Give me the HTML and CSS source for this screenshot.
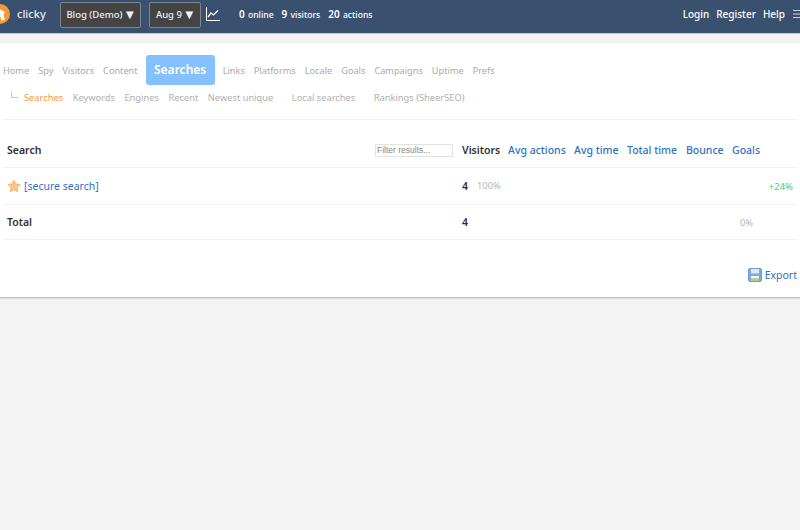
FILE: index.html
```html
<!DOCTYPE html>
<html lang="en">
<head>
<meta charset="utf-8">
<title>Clicky</title>
<link rel="stylesheet" href="styles.css">
</head>
<body>
<header class="topbar">
  <div class="brand">
    <svg class="logo" viewBox="0 0 24 24" aria-hidden="true"><circle cx="12" cy="12" r="12" fill="#f39a33"/><path d="M10 5l8 5-2 3 2 6-4 1-2-6-3 2z" fill="#fff"/></svg>
    <span class="brand-name">clicky</span>
  </div>
  <button class="drop drop-site">Blog (Demo) <span class="tri">▼</span></button>
  <button class="drop drop-date">Aug 9 <span class="tri">▼</span></button>
  <svg class="chart" viewBox="0 0 14 14" aria-hidden="true"><path d="M.5 0v13.500H14" fill="none" stroke="#fff" stroke-width="1"/><path d="M2 10l3-4 2.500 2L12 3.500" fill="none" stroke="#fff" stroke-width="1.300"/></svg>
  <div class="stats">
    <span><b>0</b> online</span>
    <span><b>9</b> visitors</span>
    <span><b>20</b> actions</span>
  </div>
  <nav class="account">
    <a>Login</a><a>Register</a><a>Help</a>
    <svg class="burger" viewBox="0 0 10 10" aria-hidden="true"><path d="M0 1.500h10M0 5h10M0 8.500h10" stroke="#c9d2de" stroke-width="1"/></svg>
  </nav>
</header>
<main class="panel">
  <nav class="mainnav">
    <a>Home</a><a>Spy</a><a>Visitors</a><a>Content</a><a class="current">Searches</a><a>Links</a><a>Platforms</a><a>Locale</a><a>Goals</a><a>Campaigns</a><a>Uptime</a><a>Prefs</a>
  </nav>
  <nav class="subnav">
    <span class="elbow"></span>
    <a class="on">Searches</a><a>Keywords</a><a>Engines</a><a>Recent</a><a>Newest unique</a><a class="far">Local searches</a><a class="far">Rankings (SheerSEO)</a>
  </nav>
  <section class="report">
    <div class="row head">
      <div class="name"><b>Search</b><input class="filter" placeholder="Filter results..."></div>
      <b>Visitors</b><a>Avg actions</a><a>Avg time</a><a>Total time</a><a>Bounce</a><a>Goals</a>
    </div>
    <div class="row data">
      <div class="name"><svg class="star" viewBox="0 0 24 24" aria-hidden="true"><path d="M12 2l3.200 6.600 7.300.9-5.300 5 1.400 7.300L12 18.300l-6.600 3.500 1.400-7.300-5.300-5 7.300-.9z" fill="#fac586" stroke="#f3b469" stroke-width="1.500" stroke-linejoin="round"/></svg><a>[secure search]</a></div>
      <div class="vis"><b>4</b><span class="muted">100%</span></div>
      <span></span><span></span><span></span><span></span>
      <span class="up">+24%</span>
    </div>
    <div class="row total">
      <div class="name"><b>Total</b></div>
      <div class="vis"><b>4</b></div>
      <span></span><span></span><span></span><span></span>
      <span class="muted zero">0%</span>
    </div>
  </section>
  <div class="export">
    <svg class="disk" viewBox="0 0 14 14" aria-hidden="true"><rect x=".5" y=".5" width="13" height="13" rx="1.500" fill="#7fa8da" stroke="#6f9bd0"/><rect x="3" y="1" width="8" height="4.500" fill="#dfe8f3"/><rect x="3" y="8" width="8" height="2.500" fill="#f2f5f0"/><rect x="3" y="10.500" width="8" height="2.500" fill="#a9d490"/></svg>
    <a>Export</a>
  </div>
</main>
</body>
</html>
```
FILE: styles.css
```css
* { box-sizing: border-box; }
html, body { margin: 0; height: 100%; }
body {
  background: #f3f3f3;
  font-family: "Noto Sans", "DejaVu Sans", sans-serif;
  font-size: 10.5px;
  color: #333;
  overflow: hidden;
}
a { color: inherit; text-decoration: none; }
b { font-weight: 600; }

.topbar {
  height: 34px;
  padding-bottom: 6px;
  background: #3a506f;
  border-bottom: 1px solid #c9c9c9;
  display: flex;
  align-items: center;
  color: #fff;
}
.brand { display: flex; align-items: center; width: 60px; flex: none; }
.logo { width: 20px; height: 20px; margin-left: -10px; flex: none; }
.brand-name { margin-left: 7px; font-size: 11px; font-weight: 500; color: #e8ecf2; }
.drop {
  height: 26px;
  margin: 2px 8px 0 0;
  padding: 0 1px 0 0;
  background: #444;
  border: 1px solid #7c8794;
  border-radius: 2px;
  color: #f0f0f0;
  font: 500 9.5px "Noto Sans", sans-serif;
  flex: none;
}
.drop-site { width: 81px; }
.drop-date { width: 52px; margin-right: 5px; }
.tri { font: 10px "DejaVu Sans", sans-serif; margin-left: 1px; }
.chart { width: 14px; height: 14px; flex: none; }
.stats { margin-left: 19px; display: flex; gap: 8px; font-size: 8.6px; font-weight: 500; }
.stats b { font-size: 10px; margin-right: 1px; }
.account { margin-left: auto; display: flex; align-items: center; gap: 7px; font-size: 10px; font-weight: 500; margin-right: -3px; }
.burger { width: 10px; height: 10px; margin-left: 1px; }

.panel {
  margin-top: 9px;
  height: 254px;
  background: #fff;
  box-shadow: 0 1px 2px rgba(0,0,0,.3);
  padding: 12px 3px 0;
  display: flex;
  flex-direction: column;
}
.mainnav { display: flex; align-items: center; gap: 9px; height: 30px; color: #aaa; font-size: 9.2px; }
.current {
  background: #85c0ff;
  color: #fff;
  font-size: 12px;
  font-weight: 600;
  width: 69px;
  height: 30px;
  line-height: 30px;
  text-align: center;
  border-radius: 3px;
  margin: 0 -1px;
}
.subnav {
  display: flex;
  align-items: center;
  gap: 9.5px;
  color: #b0b0b0;
  font-size: 9.3px;
  padding-left: 8px;
  border-bottom: 1px solid #f2f2f2;
  height: 35px;
  padding-bottom: 9px;
}
.elbow { width: 7px; height: 7px; border-left: 1px solid #c8c8c8; border-bottom: 1px solid #c8c8c8; margin-top: -6px; margin-right: -3.500px; }
.on { color: #f79a3a; }
.far { margin-left: 9px; }

.report { display: flex; flex-direction: column; margin-top: 12px; }
.row {
  display: grid;
  grid-template-columns: 459px 46px 66px 53px 59px 46px 65px;
  align-items: center;
  border-bottom: 1px solid #f2f2f2;
  color: #333;
}
.row.head { height: 36px; }
.row.data { height: 37px; }
.row.total { height: 35px; }
.head a, .name a { color: #2f72c4; }
.head > a, .head > b { font-size: 10.5px; font-weight: 500; }
.head > b { font-weight: 600; }
.name { display: flex; align-items: center; padding-left: 4px; position: relative; font-size: 10.5px; }
.filter {
  position: absolute;
  left: 372px;
  top: 1px;
  width: 78px;
  height: 13px;
  padding: 0 1px;
  border: 1px solid #e2e2e2;
  font: 8.5px "Liberation Sans", sans-serif;
}
.filter::placeholder { color: #888; }
.star { width: 14px; height: 14px; margin-right: 3px; }
.vis { display: flex; gap: 9px; white-space: nowrap; }
.muted { color: #b5b5b5; font-size: 9.3px; }
.up { color: #55c855; text-align: right; padding-right: 4px; font-size: 9.5px; }
.zero { padding-left: 8px; }
.export { display: flex; justify-content: flex-end; align-items: center; gap: 3px; margin-top: 28px; color: #2f72c4; font-size: 10.5px; }
.disk { width: 14px; height: 14px; }
```
